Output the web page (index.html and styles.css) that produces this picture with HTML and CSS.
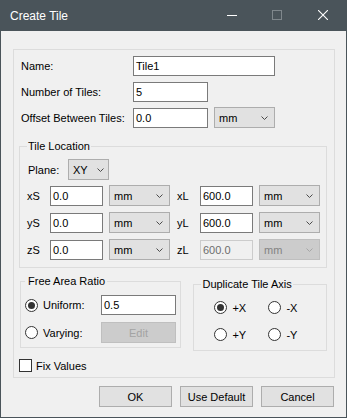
FILE: index.html
```html
<!DOCTYPE html>
<html>
<head>
<meta charset="utf-8">
<link rel="stylesheet" href="styles.css">
</head>
<body>
<div class="window">
  <div class="titlebar">
    <span class="title">Create Tile</span>
    <div class="ctl ctl-min"><svg width="10" height="10" viewBox="0 0 10 10"><path d="M0 5.5H10" stroke="#ffffff" stroke-width="1"/></svg></div>
    <div class="ctl"><svg width="10" height="10" viewBox="0 0 10 10"><rect x="0.5" y="0.5" width="9" height="9" fill="none" stroke="#7f878c" stroke-width="1"/></svg></div>
    <div class="ctl"><svg width="10" height="10" viewBox="0 0 10 10"><path d="M0 0L10 10M10 0L0 10" stroke="#ffffff" stroke-width="1.1"/></svg></div>
  </div>
  <div class="body">
    <div class="panel">
      <div class="form-grid">
        <div class="lbl">Name:</div>
        <div class="field"><div class="input w-name">Tile1</div></div>
        <div class="lbl">Number of Tiles:</div>
        <div class="field"><div class="input w-num">5</div></div>
        <div class="lbl">Offset Between Tiles:</div>
        <div class="field"><div class="input w-num">0.0</div>
          <div class="select w-unit"><span>mm</span><svg class="chev" width="7" height="4" viewBox="0 0 7 4"><path d="M0.5 0.5L3.5 3.5L6.5 0.5" fill="none" stroke="#4a4a4a"/></svg></div>
        </div>
      </div>

      <fieldset class="group loc">
        <legend>Tile Location</legend>
        <div class="plane-row">
          <div class="lbl plane-lbl">Plane:</div>
          <div class="select w-plane"><span>XY</span><svg class="chev" width="7" height="4" viewBox="0 0 7 4"><path d="M0.5 0.5L3.5 3.5L6.5 0.5" fill="none" stroke="#4a4a4a"/></svg></div>
        </div>
        <div class="loc-row">
          <div class="l">xS</div><div class="input w-loc">0.0</div>
          <div class="select w-unit"><span>mm</span><svg class="chev" width="7" height="4" viewBox="0 0 7 4"><path d="M0.5 0.5L3.5 3.5L6.5 0.5" fill="none" stroke="#4a4a4a"/></svg></div>
          <div class="l l2">xL</div><div class="input w-loc">600.0</div>
          <div class="select w-unit"><span>mm</span><svg class="chev" width="7" height="4" viewBox="0 0 7 4"><path d="M0.5 0.5L3.5 3.5L6.5 0.5" fill="none" stroke="#4a4a4a"/></svg></div>
        </div>
        <div class="loc-row">
          <div class="l">yS</div><div class="input w-loc">0.0</div>
          <div class="select w-unit"><span>mm</span><svg class="chev" width="7" height="4" viewBox="0 0 7 4"><path d="M0.5 0.5L3.5 3.5L6.5 0.5" fill="none" stroke="#4a4a4a"/></svg></div>
          <div class="l l2">yL</div><div class="input w-loc">600.0</div>
          <div class="select w-unit"><span>mm</span><svg class="chev" width="7" height="4" viewBox="0 0 7 4"><path d="M0.5 0.5L3.5 3.5L6.5 0.5" fill="none" stroke="#4a4a4a"/></svg></div>
        </div>
        <div class="loc-row">
          <div class="l">zS</div><div class="input w-loc">0.0</div>
          <div class="select w-unit"><span>mm</span><svg class="chev" width="7" height="4" viewBox="0 0 7 4"><path d="M0.5 0.5L3.5 3.5L6.5 0.5" fill="none" stroke="#4a4a4a"/></svg></div>
          <div class="l l2">zL</div><div class="input w-loc disabled">600.0</div>
          <div class="select w-unit disabled"><span>mm</span><svg class="chev" width="7" height="4" viewBox="0 0 7 4"><path d="M0.5 0.5L3.5 3.5L6.5 0.5" fill="none" stroke="#a6a6a6"/></svg></div>
        </div>
      </fieldset>

      <div class="bottom">
        <fieldset class="group far">
          <legend>Free Area Ratio</legend>
          <div class="far-row r1">
            <span class="radio checked"></span><span class="far-lbl">Uniform:</span>
            <div class="input w-far">0.5</div>
          </div>
          <div class="far-row r2">
            <span class="radio"></span><span class="far-lbl">Varying:</span>
            <div class="btn edit">Edit</div>
          </div>
        </fieldset>
        <fieldset class="group axis">
          <legend>Duplicate Tile Axis</legend>
          <div class="axis-grid">
            <div class="opt"><span class="radio checked"></span><span>+X</span></div>
            <div class="opt"><span class="radio"></span><span>-X</span></div>
            <div class="opt"><span class="radio"></span><span>+Y</span></div>
            <div class="opt"><span class="radio"></span><span>-Y</span></div>
          </div>
        </fieldset>
      </div>

      <div class="check-row"><span class="checkbox"></span><span>Fix Values</span></div>
    </div>

    <div class="buttons">
      <div class="btn">OK</div>
      <div class="btn">Use Default</div>
      <div class="btn">Cancel</div>
    </div>
  </div>
</div>
</body>
</html>
```
FILE: styles.css
```css
* { box-sizing: border-box; }
html, body { margin: 0; padding: 0; }
body {
  width: 347px;
  height: 418px;
  background: #f0f0f0;
  font-family: "Liberation Sans", Arial, sans-serif;
  font-size: 11px;
  color: #000;
  overflow: hidden;
}
.window {
  width: 347px;
  height: 418px;
  border: 1px solid #4a545a;
  background: #f0f0f0;
}
.titlebar {
  height: 30px;
  background: #4a545a;
  display: flex;
  align-items: center;
  padding-bottom: 2px;
}
.title {
  flex: 1;
  color: #ffffff;
  font-size: 12px;
  padding-left: 9px;
  padding-top: 1px;
}
.ctl {
  width: 46px;
  height: 28px;
  display: flex;
  align-items: center;
  justify-content: center;
}
.ctl svg { display: block; }
.ctl-min { padding-left: 2px; }

.body { padding: 18px 0 0 12px; }
.panel {
  width: 322px;
  border: 1px solid #dcdcdc;
  padding: 6px 7px 5px 5px;
}
.form-grid {
  display: grid;
  grid-template-columns: 112px auto;
  grid-auto-rows: 20px;
  row-gap: 6px;
  margin-left: 2px;
}
.lbl { display: flex; align-items: center; white-space: nowrap; }
.field { display: flex; align-items: flex-start; }
.input {
  height: 20px;
  border: 1px solid #7a7a7a;
  background: #ffffff;
  padding-left: 2px;
  display: flex;
  align-items: center;
  white-space: nowrap;
}
.input.disabled {
  background: #f0f0f0;
  border-color: #cccccc;
  color: #6d6d6d;
}
.select {
  height: 21px;
  border: 1px solid #adadad;
  background: #e1e1e1;
  display: flex;
  align-items: center;
  justify-content: space-between;
  padding: 0 6px 0 4px;
}
.select.disabled {
  background: #cccccc;
  border-color: #bfbfbf;
  color: #838383;
}
.chev { display: block; }
.w-name { width: 142px; }
.w-num { width: 75px; }
.w-unit { width: 61px; }
.field .select { margin-top: -1px; margin-left: 6px; }

.group {
  border: 1px solid #dcdcdc;
  min-width: 0;
}
.group legend {
  padding: 0 1px;
  line-height: 13px;
  font-size: 11px;
}
.group.loc {
  width: 308px;
  margin: 12px 0 0 0;
  padding: 6px 0 7px 7px;
}
.plane-row {
  display: flex;
  align-items: center;
  height: 21px;
  margin-bottom: 5px;
  padding-left: 1px;
}
.plane-lbl { width: 40px; height: 21px; }
.w-plane { width: 41px; padding-right: 4px; }
.loc-row {
  display: flex;
  align-items: flex-start;
  height: 21px;
}
.loc-row + .loc-row { margin-top: 6px; }
.loc-row .l {
  width: 23px;
  height: 21px;
  display: flex;
  align-items: center;
}
.loc-row .l2 { margin-left: 7px; }
.w-loc { width: 53px; margin-top: 1px; }
.loc-row .select { margin-left: 6px; }

.bottom { display: flex; align-items: flex-start; }
.group.far {
  width: 162px;
  margin: 7px 0 0 1px;
  padding: 7px 0 4px 4px;
}
.group.far legend { padding: 0 2px 0 3px; }
.far-row { display: flex; align-items: center; }
.far-row.r1 { height: 20px; }
.far-row.r2 { height: 21px; margin-top: 7px; }
.far-lbl { width: 58px; }
.radio {
  width: 13px;
  height: 13px;
  border: 1px solid #333333;
  border-radius: 50%;
  background: #ffffff;
  display: flex;
  align-items: center;
  justify-content: center;
  flex: none;
  margin-right: 5px;
}
.radio.checked::after {
  content: "";
  width: 7px;
  height: 7px;
  border-radius: 50%;
  background: #333333;
}
.w-far { width: 75px; }
.btn {
  width: 73px;
  height: 21px;
  border: 1px solid #adadad;
  background: #e1e1e1;
  display: flex;
  align-items: center;
  justify-content: center;
}
.btn.edit {
  width: 75px;
  background: #cccccc;
  border-color: #bfbfbf;
  color: #a3a3a3;
}
.group.axis {
  width: 134px;
  margin: 10px 0 0 12px;
  padding: 10px 0 9px 7px;
}
.axis-grid {
  margin-left: 13px;
  display: grid;
  grid-template-columns: 54px 54px;
  grid-auto-rows: 13px;
  row-gap: 14px;
}
.opt { display: flex; align-items: center; }
.opt .radio { margin-right: 5px; }

.check-row {
  display: flex;
  align-items: center;
  height: 13px;
  margin-top: 8px;
}
.checkbox {
  width: 13px;
  height: 13px;
  border: 1px solid #333333;
  background: #ffffff;
  margin-right: 4px;
}
.buttons {
  width: 322px;
  display: flex;
  justify-content: flex-end;
  gap: 8px;
  margin-top: 8px;
  padding-right: 1px;
}
```
